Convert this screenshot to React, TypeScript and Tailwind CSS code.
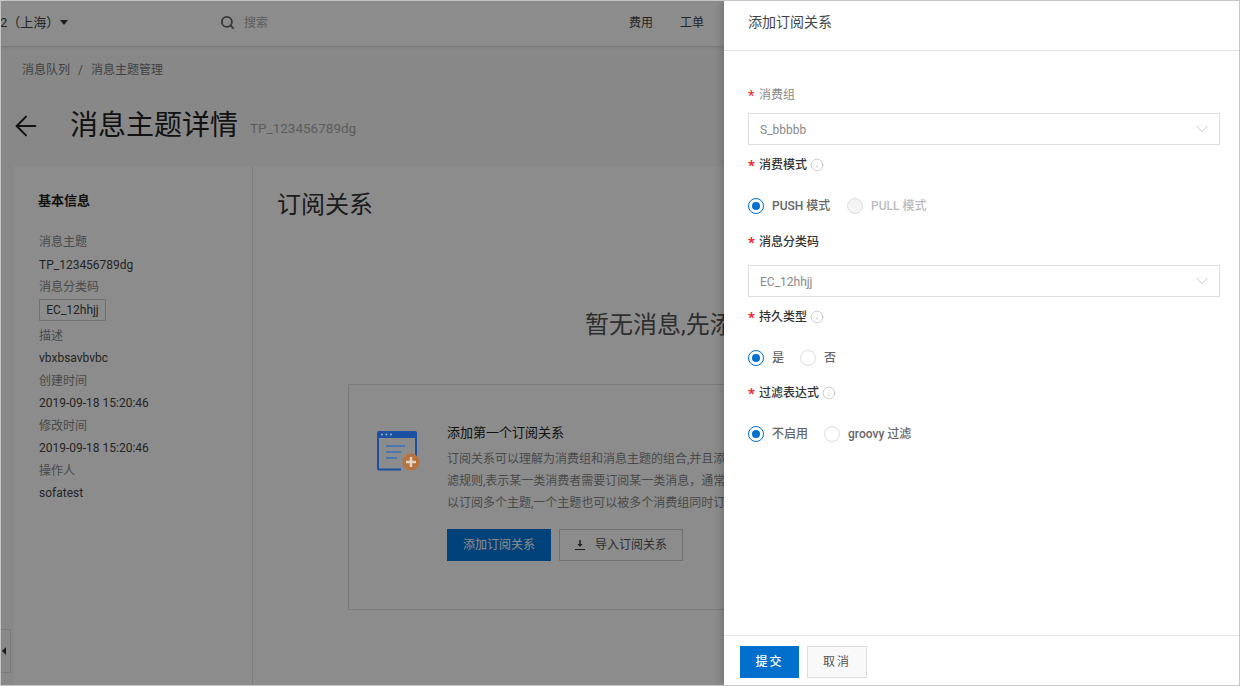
import { ArrowLeft, ChevronDown, Info, Search } from "lucide-react";

const info = [
  { label: "消息主题", value: "TP_123456789dg" },
  { label: "消息分类码", tag: "EC_12hhjj" },
  { label: "描述", value: "vbxbsavbvbc" },
  { label: "创建时间", value: "2019-09-18 15:20:46" },
  { label: "修改时间", value: "2019-09-18 15:20:46" },
  { label: "操作人", value: "sofatest" },
];

function Label({ text, strong = true, hint = false }: { text: string; strong?: boolean; hint?: boolean }) {
  return (
    <div className={`flex h-5 items-center text-xs ${strong ? "font-medium text-[#333]" : "text-[#888]"}`}>
      <span className={`mt-[3px] w-[10px] text-[15px] leading-none text-[#f5222d] ${strong ? "font-bold" : ""}`}>*</span>
      <span className="ml-[1px]">{text}</span>
      {hint && <Info className="ml-[3px] h-[14px] w-[14px] text-[#bbb]" strokeWidth={1.25} />}
    </div>
  );
}

function Select({ value }: { value: string }) {
  return (
    <div className="flex h-8 items-center justify-between border border-[#ddd] pl-[11px] pr-[7px] text-xs text-[#888]">
      <span className="pt-[1px]">{value}</span>
      <ChevronDown className="h-5 w-5 text-[#bbb]" strokeWidth={1} />
    </div>
  );
}

function Radio({ text, checked = false, disabled = false, width }: { text: string; checked?: boolean; disabled?: boolean; width: string }) {
  return (
    <div className={`flex items-center ${width}`}>
      {checked ? (
        <span className="flex h-4 w-4 items-center justify-center rounded-full border border-[#0070cc]">
          <span className="h-2 w-2 rounded-full bg-[#0070cc]" />
        </span>
      ) : (
        <span className={`h-4 w-4 rounded-full border border-[#ddd] ${disabled ? "bg-[#f4f4f4]" : "bg-white"}`} />
      )}
      <span className={`ml-2 text-xs font-medium ${disabled ? "text-[#bbb]" : "text-[#666]"}`}>{text}</span>
    </div>
  );
}

function EmptyIcon() {
  return (
    <svg className="relative z-10" width="43" height="40" viewBox="0 0 43 40" fill="none">
      <path d="M39 1 V 27 M24 38.500 H 2 Q 1 38.500 1 37 V 2" stroke="#1c50a0" strokeWidth="2" />
      <path d="M2 0 H 38 Q 40 0 40 2 V 7 H 0 V 2 Q 0 0 2 0 Z" fill="#1c50a0" />
      <circle cx="5" cy="3.500" r="1" fill="#9ab0d0" />
      <circle cx="9.500" cy="3.500" r="1" fill="#9ab0d0" />
      <circle cx="14" cy="3.500" r="1" fill="#9ab0d0" />
      <path d="M9 15 H 28 M9 21 H 24 M9 27 H 20" stroke="#4a78b4" strokeWidth="2" />
      <circle cx="34" cy="31" r="8.500" fill="#b8723c" />
      <path d="M34 26 V 36 M29 31 H 39" stroke="#e0d4c8" strokeWidth="2.500" />
    </svg>
  );
}

export default function App() {
  return (
    <div
      className="relative h-[686px] w-[1240px] overflow-hidden border border-[#c6c6c6] bg-white text-[#333]"
      style={{ fontFamily: 'Roboto, "Noto Sans CJK SC", sans-serif' }}
    >
      {/* page behind the drawer */}
      <div className="h-full w-full bg-[#f7f7f7]">
        <div className="flex h-[45px] items-center bg-white pb-[2px] text-xs shadow-sm">
          <div className="flex w-[219px] items-center overflow-hidden text-[13px] text-[#444]">
            <span className="-ml-[1px]">2（上海）</span>
            <span className="ml-[1px] mt-[1px] h-0 w-0 border-x-[4px] border-t-[5px] border-x-transparent border-t-[#333]" />
          </div>
          <Search className="h-[15px] w-[15px] text-[#666]" strokeWidth={3} />
          <span className="ml-[9px] text-[#aaa]">搜索</span>
          <span className="ml-[361px] text-[#444]">费用</span>
          <span className="ml-[27px] text-[#444]">工单</span>
        </div>

        <div className="pl-[21px] pt-[16px] text-xs leading-4 text-[#777]">
          消息队列<span className="mx-[8px]">/</span>消息主题管理
        </div>

        <div className="mt-[28px] flex h-10 items-center pl-[9px]">
          <ArrowLeft className="h-[32px] w-[32px] text-[#222]" strokeWidth={1.5} />
          <span className="ml-[28px] text-[28px] text-[#222]">消息主题详情</span>
          <span className="ml-3 mt-1 text-[13.500px] text-[#aaa]">TP_123456789dg</span>
        </div>

        <div className="ml-[13px] mt-[20px] flex h-[600px] bg-white">
          <div className="w-[239px] border-r border-[#e4e4e4] pl-6 pt-[25px]">
            <div className="text-[13px] font-bold leading-5 text-[#222]">基本信息</div>
            <div className="ml-[1px] mt-[20px] text-xs">
              {info.map((row) => (
                <div key={row.label}>
                  <div className="flex h-[22.500px] items-center text-[#888]">{row.label}</div>
                  {row.tag ? (
                    <div className="mb-[4px] flex h-[22px] w-[67px] items-center justify-center border border-[#ccc] text-[#444]">
                      {row.tag}
                    </div>
                  ) : (
                    <div className="flex h-[22.500px] items-center text-[#444]">{row.value}</div>
                  )}
                </div>
              ))}
            </div>
          </div>

          <div className="flex-1 pl-6 pt-[21px]">
            <div className="text-2xl leading-9 text-[#333]">订阅关系</div>
            <div className="ml-[308px] mt-[86px] whitespace-nowrap text-[24px] leading-8 text-[#555]">暂无消息,先添</div>
            <div className="ml-[71px] mt-[43px] flex h-[226px] w-[800px] border border-[#ddd] pl-7 pt-[46px]">
              <EmptyIcon />
              <div className="ml-[27px] w-[600px]">
                <div className="-mt-[8px] text-[13px] leading-5 text-[#222]">添加第一个订阅关系</div>
                <div className="mt-[5px] whitespace-nowrap text-xs leading-[22px] text-[#888]">
                  <div>订阅关系可以理解为消费组和消息主题的组合,并且添加一些过滤规则</div>
                  <div>滤规则,表示某一类消费者需要订阅某一类消息，通常一个消费组可</div>
                  <div>以订阅多个主题,一个主题也可以被多个消费组同时订阅</div>
                </div>
                <div className="mt-[15px] flex gap-2 text-xs">
                  <div className="flex h-8 w-[104px] items-center justify-center bg-[#0078dc] text-white">添加订阅关系</div>
                  <div className="flex h-8 w-[124px] items-center justify-center gap-[10px] border border-[#ccc] text-[#555]">
                    <svg width="10" height="10" viewBox="0 0 10 10" fill="none">
                      <path d="M5 0 V 5" stroke="#333" strokeWidth="1.500" />
                      <path d="M2.500 4 H 7.500 L 5 7 Z" fill="#333" />
                      <path d="M0 9.500 H 10" stroke="#333" />
                    </svg>
                    导入订阅关系
                  </div>
                </div>
              </div>
            </div>
          </div>
        </div>
      </div>

      {/* sidebar toggle */}
      <div className="absolute bottom-[12px] left-0 flex h-[44px] w-[10px] items-center border border-l-0 border-[#ddd] pl-[1px]">
        <span className="h-0 w-0 border-y-[4px] border-r-[4px] border-y-transparent border-r-[#333]" />
      </div>

      <div className="absolute inset-0 bg-black/45" />

      {/* drawer */}
      <div className="absolute bottom-0 right-0 top-0 z-20 flex w-[515px] flex-col bg-white shadow-[-2px_0_8px_rgba(0,0,0,0.2)]">
        <div className="flex h-[50px] shrink-0 items-center border-b border-[#e0e0e0] pl-6 pb-[7px] text-sm text-[#444]">添加订阅关系</div>

        <div className="flex-1 pl-6 pr-[19px] pt-[34px]">
          <Label text="消费组" strong={false} />
          <div className="mt-[8px]"><Select value="S_bbbbb" /></div>

          <div className="mt-[10px]"><Label text="消费模式" hint /></div>
          <div className="mt-[23px] flex h-4 items-center">
            <Radio text="PUSH 模式" checked width="w-[99px]" />
            <Radio text="PULL 模式" disabled width="w-[110px]" />
          </div>

          <div className="mt-[18px]"><Label text="消息分类码" /></div>
          <div className="mt-[13px]"><Select value="EC_12hhjj" /></div>

          <div className="mt-[10px]"><Label text="持久类型" hint /></div>
          <div className="mt-[23px] flex h-4 items-center">
            <Radio text="是" checked width="w-[52px]" />
            <Radio text="否" width="w-[60px]" />
          </div>

          <div className="mt-[17px]"><Label text="过滤表达式" hint /></div>
          <div className="mt-[23px] flex h-4 items-center">
            <Radio text="不启用" checked width="w-[76px]" />
            <Radio text="groovy 过滤" width="w-[120px]" />
          </div>
        </div>

        <div className="flex h-[50px] shrink-0 gap-2 border-t border-[#e4e4e4] pl-4 pt-[10px] text-xs">
          <div className="flex h-8 w-[59px] items-center justify-center bg-[#0070cc] font-medium tracking-[2px] text-white">提交</div>
          <div className="flex h-8 w-[60px] items-center justify-center border border-[#ddd] bg-[#f9f9f9] tracking-[2px] text-[#555]">取消</div>
        </div>
      </div>
    </div>
  );
}
